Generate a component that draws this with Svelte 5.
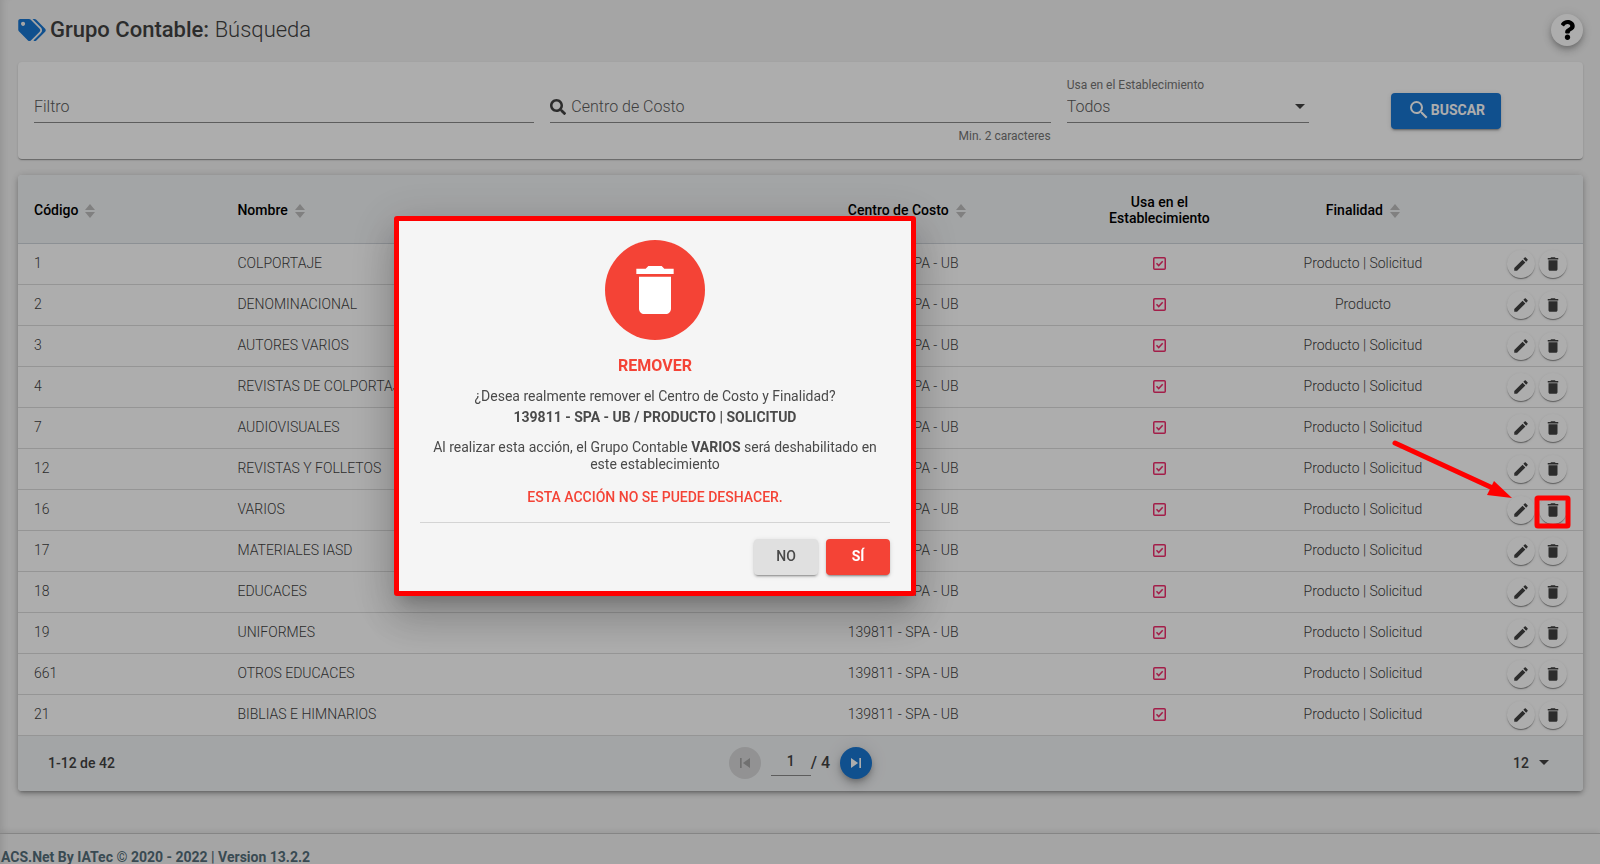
<script lang="ts">
	const groups = [
		{ code: 1, name: 'COLPORTAJE', purpose: 'Producto | Solicitud' },
		{ code: 2, name: 'DENOMINACIONAL', purpose: 'Producto' },
		{ code: 3, name: 'AUTORES VARIOS', purpose: 'Producto | Solicitud' },
		{ code: 4, name: 'REVISTAS DE COLPORTAJE', purpose: 'Producto | Solicitud' },
		{ code: 7, name: 'AUDIOVISUALES', purpose: 'Producto | Solicitud' },
		{ code: 12, name: 'REVISTAS Y FOLLETOS', purpose: 'Producto | Solicitud' },
		{ code: 16, name: 'VARIOS', purpose: 'Producto | Solicitud' },
		{ code: 17, name: 'MATERIALES IASD', purpose: 'Producto | Solicitud' },
		{ code: 18, name: 'EDUCACES', purpose: 'Producto | Solicitud' },
		{ code: 19, name: 'UNIFORMES', purpose: 'Producto | Solicitud' },
		{ code: 661, name: 'OTROS EDUCACES', purpose: 'Producto | Solicitud' },
		{ code: 21, name: 'BIBLIAS E HIMNARIOS', purpose: 'Producto | Solicitud' }
	];
	const costCenter = '139811 - SPA - UB';

	let filter = $state('');
	let center = $state('');
	let page = $state('1');
	let selected = $state(16); // row waiting for confirmation
	let open = $state(true);

	function askRemove(code: number) {
		selected = code;
		open = true;
	}
</script>

{#snippet trash()}
	<svg viewBox="0 0 24 24" aria-hidden="true"><path d="M6 19c0 1.100.9 2 2 2h8c1.100 0 2-.9 2-2V7H6v12zM19 4h-3.500l-1-1h-5l-1 1H5v2h14V4z" /></svg>
{/snippet}

{#snippet sort()}
	<svg class="sort" viewBox="0 0 10 14" aria-hidden="true"><path d="M5 0l5 6H0zM5 14l5-6H0z" /></svg>
{/snippet}

{#snippet caret()}
	<svg class="caret" viewBox="0 0 10 5" aria-hidden="true"><path d="M0 0h10L5 5z" /></svg>
{/snippet}

<div class="page">
	<main>
		<header>
			<svg class="tags" viewBox="0 0 640 512" aria-hidden="true">
				<path d="M497.941 225.941L286.059 14.059A48 48 0 0 0 252.118 0H48C21.490 0 0 21.490 0 48v204.118a48 48 0 0 0 14.059 33.941l211.882 211.882c18.744 18.745 49.136 18.746 67.882 0l204.118-204.118c18.745-18.745 18.745-49.137 0-67.882zM112 160c-26.510 0-48-21.490-48-48s21.490-48 48-48 48 21.490 48 48-21.490 48-48 48zm513.941 133.823L421.823 497.941c-18.745 18.745-49.137 18.745-67.882 0l-.36-.36L527.640 323.522c16.999-16.999 26.360-39.600 26.360-63.640s-9.362-46.641-26.360-63.640L331.397 0h48.721a48 48 0 0 1 33.941 14.059l211.882 211.882c18.745 18.745 18.745 49.137 0 67.882z" />
			</svg>
			<h1>Grupo Contable: <span>Búsqueda</span></h1>
			<button class="help" aria-label="Ayuda">
				<svg viewBox="0 0 384 512" aria-hidden="true"><path d="M202.021 0C122.202 0 70.503 32.703 29.914 91.026c-7.363 10.580-5.093 25.086 5.178 32.874l43.138 32.709c10.373 7.865 25.132 6.026 33.253-4.148 25.049-31.381 43.630-49.449 82.757-49.449 30.764 0 68.816 19.799 68.816 49.631 0 22.552-18.617 34.134-48.993 51.164-35.423 19.860-82.299 44.576-82.299 106.405V320c0 13.255 10.745 24 24 24h72.471c13.255 0 24-10.745 24-24v-5.773c0-42.860 125.268-44.645 125.268-160.627C377.504 66.256 286.902 0 202.021 0zM192 373.459c-38.196 0-69.271 31.075-69.271 69.271 0 38.195 31.075 69.270 69.271 69.270s69.271-31.075 69.271-69.271-31.075-69.270-69.271-69.270z" /></svg>
			</button>
		</header>

		<form class="card filters" onsubmit={(e) => e.preventDefault()}>
			<div class="field">
				<div class="control">
					<input aria-label="Filtro" placeholder="Filtro" bind:value={filter} />
				</div>
			</div>
			<div class="field">
				<div class="control">
					<svg class="lens" viewBox="0 0 512 512" aria-hidden="true"><path d="M505 442.700L405.300 343c-4.500-4.500-10.600-7-17-7H372c27.600-35.300 44-79.700 44-128C416 93.100 322.900 0 208 0S0 93.100 0 208s93.100 208 208 208c48.300 0 92.700-16.400 128-44v16.300c0 6.400 2.500 12.500 7 17l99.700 99.700c9.400 9.400 24.600 9.400 33.900 0l28.300-28.300c9.400-9.400 9.400-24.600.1-34zM208 336c-70.700 0-128-57.200-128-128 0-70.700 57.200-128 128-128 70.700 0 128 57.200 128 128 0 70.700-57.200 128-128 128z" /></svg>
					<input aria-label="Centro de Costo" placeholder="Centro de Costo" bind:value={center} />
				</div>
				<small>Min. 2 caracteres</small>
			</div>
			<div class="field">
				<label for="usage">Usa en el Establecimiento</label>
				<div class="control">
					<select id="usage"><option>Todos</option><option>Sí</option><option>No</option></select>
					{@render caret()}
				</div>
			</div>
			<div class="submit">
				<button class="btn primary">
					<svg viewBox="0 0 24 24" aria-hidden="true"><path d="M15.500 14h-.79l-.28-.27A6.471 6.471 0 0 0 16 9.500 6.500 6.500 0 1 0 9.500 16c1.610 0 3.090-.59 4.230-1.570l.27.28v.79l5 4.990L20.490 19l-4.990-5zm-6 0C7.010 14 5 11.990 5 9.500S7.010 5 9.500 5 14 7.010 14 9.500 11.990 14 9.500 14z" /></svg>
					BUSCAR
				</button>
			</div>
		</form>

		<section class="card list">
			<table>
				<colgroup>
					<col class="c-code" /><col class="c-name" /><col class="c-center" />
					<col class="c-use" /><col class="c-purpose" /><col class="c-actions" />
				</colgroup>
				<thead>
					<tr>
						<th>Código{@render sort()}</th>
						<th>Nombre{@render sort()}</th>
						<th>Centro de Costo{@render sort()}</th>
						<th class="mid">Usa en el<br />Establecimiento</th>
						<th class="mid">Finalidad{@render sort()}</th>
						<td></td>
					</tr>
				</thead>
				<tbody>
					{#each groups as group (group.code)}
						<tr>
							<td>{group.code}</td>
							<td>{group.name}</td>
							<td>{costCenter}</td>
							<td class="mid">
								<svg class="check" viewBox="0 0 13 13" role="img" aria-label="Sí"><rect x=".75" y=".75" width="11.500" height="11.500" rx="1" /><path d="M3.500 6.300l2.200 2.300 4-4.300" /></svg>
							</td>
							<td class="mid">{group.purpose}</td>
							<td class="tools">
								<div class="actions">
									<button class="round" aria-label="Editar">
										<svg viewBox="0 0 24 24" aria-hidden="true"><path d="M3 17.250V21h3.750L17.810 9.940l-3.750-3.750L3 17.250zM20.710 7.040c.39-.39.39-1.020 0-1.410l-2.340-2.340c-.39-.39-1.020-.39-1.410 0l-1.830 1.830 3.750 3.750 1.830-1.830z" /></svg>
									</button>
									<button class="round" aria-label="Remover" onclick={() => askRemove(group.code)}>
										{@render trash()}
									</button>
									{#if open && group.code === selected}
										<svg class="pointer" viewBox="0 0 180 90" aria-hidden="true">
											<path class="line" d="M4 4L106 51" />
											<path class="head" d="M103 42L121 59L96 56z" />
											<rect x="146" y="59" width="31" height="28" rx="1" />
										</svg>
									{/if}
								</div>
							</td>
						</tr>
					{/each}
				</tbody>
			</table>

			<div class="pager">
				<span>1-12 de 42</span>
				<div class="nav">
					<button class="step" disabled aria-label="Primera página">
						<svg viewBox="0 0 24 24" aria-hidden="true"><path d="M6 6h2v12H6zm3.500 6l8.500 6V6z" /></svg>
					</button>
					<input aria-label="Página" bind:value={page} />
					<span class="total">/ 4</span>
					<button class="step next" aria-label="Última página">
						<svg viewBox="0 0 24 24" aria-hidden="true"><path d="M6 18l8.500-6L6 6v12zM16 6v12h2V6h-2z" /></svg>
					</button>
				</div>
				<div class="size">
					<select aria-label="Registros por página"><option>12</option><option>24</option><option>48</option></select>
					{@render caret()}
				</div>
			</div>
		</section>
	</main>

	<footer>ACS.Net By IATec © 2020 - 2022 | Version 13.2.2</footer>
</div>

{#if open}
	<div class="backdrop">
		<div class="dialog" role="alertdialog" aria-modal="true" aria-labelledby="dialog-title">
			<div class="badge">{@render trash()}</div>
			<h2 id="dialog-title">REMOVER</h2>
			<p class="ask">¿Desea realmente remover el Centro de Costo y Finalidad?<br /><strong>139811 - SPA - UB / PRODUCTO | SOLICITUD</strong></p>
			<p>Al realizar esta acción, el Grupo Contable <strong>VARIOS</strong> será deshabilitado en este establecimiento</p>
			<p class="warn">ESTA ACCIÓN NO SE PUEDE DESHACER.</p>
			<div class="buttons">
				<button class="btn" onclick={() => (open = false)}>NO</button>
				<button class="btn danger" onclick={() => (open = false)}>SÍ</button>
			</div>
		</div>
	</div>
{/if}

<style>
	:global(body) {
		margin: 0;
		background: #f4f4f4;
		color: #424242;
		font: 14px/16px Roboto, 'Liberation Sans', sans-serif;
	}
	.page {
		display: flex;
		flex-direction: column;
		height: 100vh;
		overflow: hidden;
		box-shadow: inset 8px 0 8px -6px rgba(0, 0, 0, 0.12);
	}
	main {
		flex: 1;
		padding: 0 17px 0 18px;
	}
	button,
	input,
	select {
		font: inherit;
		color: inherit;
		border: 0;
		padding: 0;
		margin: 0;
		background: none;
		outline: 0;
	}
	button {
		cursor: pointer;
	}
	svg {
		fill: currentColor;
		flex: none;
	}

	/* title bar */
	header {
		display: flex;
		align-items: center;
		gap: 4px;
		height: 60px;
		padding-bottom: 2px;
	}
	.tags {
		width: 28px;
		height: 22px;
		color: #1976d2;
	}
	h1 {
		margin: 0;
		font-size: 22px;
		line-height: 28px;
		font-weight: 500;
	}
	h1 span {
		font-weight: 300;
	}
	.help {
		display: grid;
		place-items: center;
		width: 32px;
		height: 32px;
		margin-left: auto;
		border-radius: 50%;
		background: #fff;
		color: #000;
		box-shadow: 0 3px 5px -1px rgba(0, 0, 0, 0.2), 0 5px 9px rgba(0, 0, 0, 0.14), 0 1px 14px rgba(0, 0, 0, 0.12);
	}
	.help svg {
		width: 15px;
		height: 20px;
	}

	.card {
		border-radius: 4px;
		background: #fff;
	}

	/* filters */
	.filters {
		display: grid;
		grid-template-columns: 2fr 2fr 1fr 1fr;
		height: 97px;
		padding-left: 16px;
		box-shadow: 0 2px 1px -1px rgba(0, 0, 0, 0.2), 0 1px 1px rgba(0, 0, 0, 0.14), 0 1px 3px rgba(0, 0, 0, 0.12);
	}
	.field {
		display: grid;
		grid-template-rows: 16px 29px 16px;
		padding: 16px 16px 0 0;
		color: #5c5c5c;
		font-weight: 300;
	}
	.field label,
	.field small {
		color: #757575;
		font-size: 12px;
		line-height: 14px;
		font-weight: 400;
	}
	.field small {
		grid-row: 3;
		margin-top: 6px;
		text-align: right;
	}
	.control {
		grid-row: 2;
		display: flex;
		align-items: center;
		gap: 5px;
		padding-bottom: 3px;
		border-bottom: 1px solid #8a8a8a;
		font-size: 16px;
	}
	.control input,
	.control select {
		flex: 1;
		min-width: 0;
		height: 24px;
		appearance: none;
	}
	.control input::placeholder {
		color: #5c5c5c;
		opacity: 1;
	}
	.lens {
		width: 16px;
		height: 16px;
		color: #424242;
	}
	.caret {
		width: 10px;
		height: 5px;
		margin-right: 4px;
		color: #424242;
		pointer-events: none;
	}
	.submit {
		display: flex;
		justify-content: center;
		align-items: flex-start;
		padding: 31px 16px 0 0;
	}
	.btn {
		display: inline-flex;
		align-items: center;
		justify-content: center;
		min-width: 64px;
		height: 36px;
		padding: 0 16px 2px;
		border-radius: 4px;
		background: #e0e0e0;
		font-weight: 500;
		box-shadow: 0 3px 1px -2px rgba(0, 0, 0, 0.2), 0 2px 2px rgba(0, 0, 0, 0.14), 0 1px 5px rgba(0, 0, 0, 0.12);
	}
	.btn svg {
		width: 24px;
		height: 24px;
	}
	.primary {
		background: #1976d2;
		color: #fff;
		font-weight: 700;
	}
	.danger {
		background: #f44336;
		color: #fff;
		font-weight: 700;
	}

	/* table */
	.list {
		margin-top: 16px;
		box-shadow: 0 3px 3px -2px rgba(0, 0, 0, 0.2), 0 3px 4px rgba(0, 0, 0, 0.14), 0 1px 8px rgba(0, 0, 0, 0.2);
	}
	table {
		width: 100%;
		table-layout: fixed;
		border-collapse: separate;
		border-spacing: 0;
	}
	.c-code { width: 13%; }
	.c-name { width: 39%; }
	.c-center { width: 15%; }
	.c-use { width: 12%; }
	.c-purpose { width: 14%; }
	.c-actions { width: 7%; }
	thead tr {
		height: 69px;
	}
	thead th,
	thead td {
		padding-top: 2px;
		background: #f1f3f5;
		border-bottom: 1px solid #cfd4da;
	}
	thead tr > :first-child {
		border-top-left-radius: 4px;
	}
	thead tr > :last-child {
		border-top-right-radius: 4px;
	}
	th,
	td {
		padding: 0 0 0 16px;
		text-align: left;
	}
	th {
		color: #000;
		font-weight: 500;
	}
	.mid {
		padding-left: 0;
		padding-right: 2px;
		text-align: center;
	}
	.sort {
		width: 10px;
		height: 14px;
		margin-left: 7px;
		vertical-align: -3px;
		color: #bdbdbd;
	}
	tbody tr {
		height: 41px;
	}
	tbody td {
		padding-bottom: 2px;
		border-bottom: 1px solid #dcdcdc;
		font-weight: 300;
	}
	tbody .tools {
		padding-bottom: 0;
	}
	.check {
		display: block;
		width: 13px;
		height: 13px;
		margin: 0 auto;
		fill: none;
		stroke: #f02d6c;
		stroke-width: 1.5;
	}
	.actions {
		position: relative;
		display: flex;
		justify-content: flex-end;
		gap: 4px;
		padding-right: 16px;
	}
	.round {
		display: grid;
		place-items: center;
		width: 28px;
		height: 28px;
		border-radius: 50%;
		box-shadow: 0 2px 1px -1px rgba(0, 0, 0, 0.3), 0 1px 1px rgba(0, 0, 0, 0.14), 0 1px 3px rgba(0, 0, 0, 0.12);
	}
	.round svg {
		width: 18px;
		height: 18px;
	}
	.pointer {
		position: absolute;
		right: 12px;
		bottom: -5px;
		z-index: 20;
		width: 180px;
		height: 90px;
		color: #f00;
		pointer-events: none;
	}
	.pointer .line,
	.pointer rect {
		fill: none;
		stroke: currentColor;
		stroke-width: 5;
		stroke-linecap: round;
		stroke-linejoin: round;
	}

	/* paginator */
	.pager {
		display: grid;
		grid-template-columns: 1fr auto 1fr;
		align-items: center;
		height: 53px;
		padding: 0 34px 2px 30px;
		border-radius: 0 0 4px 4px;
		background: #f1f3f5;
		font-weight: 500;
	}
	.nav {
		display: flex;
		align-items: center;
		padding-left: 4px;
	}
	.nav input {
		width: 40px;
		height: 24px;
		padding-bottom: 2px;
		margin-left: 10px;
		border-bottom: 1px solid #8a8a8a;
		text-align: center;
	}
	.total {
		margin-right: 10px;
		font-size: 16px;
	}
	.step {
		display: grid;
		place-items: center;
		width: 32px;
		height: 32px;
		border-radius: 50%;
		background: #d7d8d9;
		color: #a6a6a6;
	}
	.step svg {
		width: 20px;
		height: 20px;
	}
	.next {
		background: #1976d2;
		color: #fff;
		box-shadow: 0 3px 5px -1px rgba(0, 0, 0, 0.2), 0 6px 10px rgba(0, 0, 0, 0.14), 0 1px 18px rgba(0, 0, 0, 0.12);
	}
	.size {
		display: flex;
		align-items: center;
		justify-content: flex-end;
		gap: 10px;
	}
	.size select {
		appearance: none;
	}
	.size .caret {
		margin-right: 0;
	}

	footer {
		height: 31px;
		box-sizing: border-box;
		padding: 15px 0 0 1px;
		border-top: 1px solid #c4c4c4;
		box-shadow: 0 -2px 6px rgba(0, 0, 0, 0.08);
		color: #546e7a;
		font-weight: 700;
	}

	/* confirmation */
	.backdrop {
		position: fixed;
		inset: 0;
		z-index: 10;
		display: flex;
		align-items: center;
		justify-content: center;
		padding: 0 290px 52px 0;
		background: rgba(0, 0, 0, 0.32);
	}
	.dialog {
		box-sizing: border-box;
		width: 522px;
		padding: 19px 21px 16px;
		border: 5px solid #f00;
		border-radius: 3px;
		background: #f5f5f5;
		color: #4a4a4a;
		text-align: center;
		box-shadow: 0 11px 15px -7px rgba(0, 0, 0, 0.2), 0 24px 38px 3px rgba(0, 0, 0, 0.14), 0 9px 46px 8px rgba(0, 0, 0, 0.12);
	}
	.badge {
		display: grid;
		place-items: center;
		width: 100px;
		height: 100px;
		margin: 0 auto;
		border-radius: 50%;
		background: #f44336;
		color: #fff;
	}
	.badge svg {
		width: 64px;
		height: 64px;
	}
	h2 {
		margin: 16px 0 10px;
		color: #f44336;
		font-size: 16px;
		line-height: 20px;
		font-weight: 700;
	}
	.dialog p {
		margin: 0 0 12px;
		line-height: 17px;
	}
	.dialog .ask {
		margin-bottom: 11px;
		line-height: 21px;
	}
	.dialog .warn {
		margin: 16px 0;
		color: #f44336;
		font-weight: 500;
	}
	.buttons {
		display: flex;
		justify-content: flex-end;
		gap: 8px;
		padding-top: 16px;
		border-top: 1px solid #d4d4d4;
	}
</style>
